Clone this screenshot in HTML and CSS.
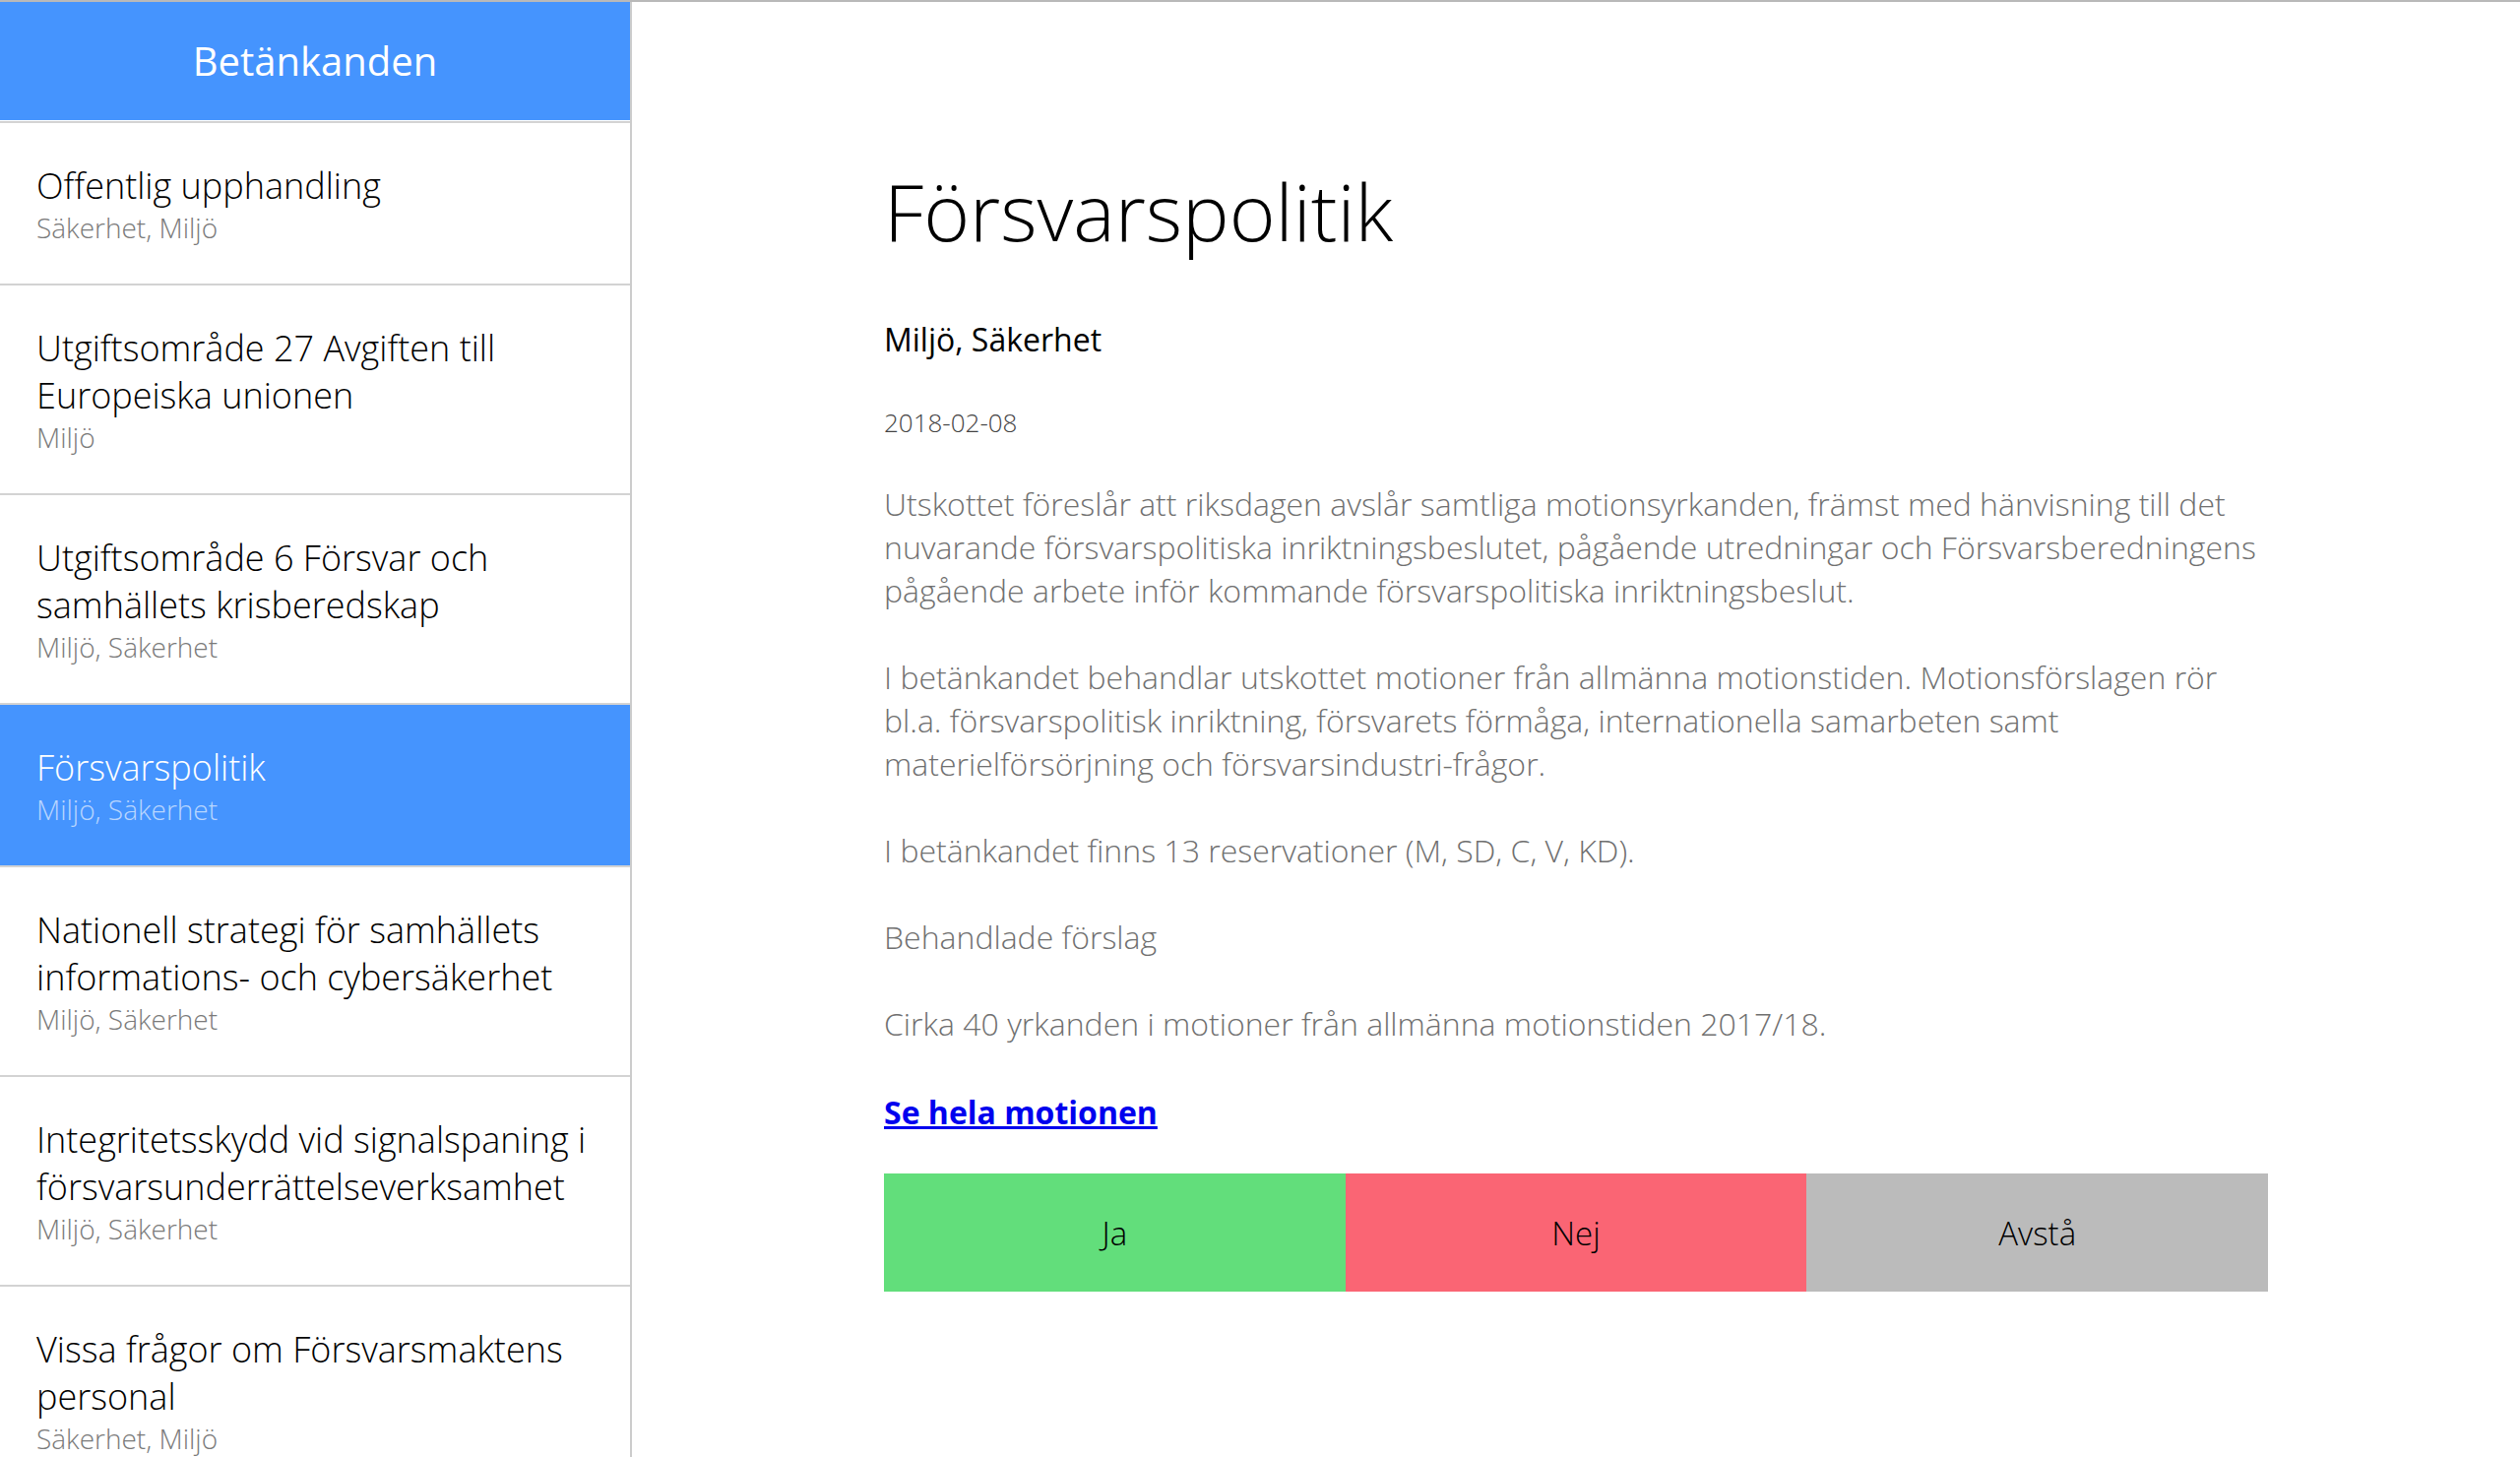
FILE: index.html
```html
<!DOCTYPE html>
<html lang="sv">
<head>
<meta charset="utf-8">
<title>Betänkanden</title>
<link rel="stylesheet" href="styles.css">
</head>
<body>
<div class="app">
  <aside class="sidebar">
    <header class="sidebar-header">Betänkanden</header>
    <ul class="list">
      <li class="item">
        <div class="item-title">Offentlig upphandling</div>
        <div class="item-tags">Säkerhet, Miljö</div>
      </li>
      <li class="item">
        <div class="item-title">Utgiftsområde 27 Avgiften till Europeiska unionen</div>
        <div class="item-tags">Miljö</div>
      </li>
      <li class="item">
        <div class="item-title">Utgiftsområde 6 Försvar och samhällets krisberedskap</div>
        <div class="item-tags">Miljö, Säkerhet</div>
      </li>
      <li class="item item-active">
        <div class="item-title">Försvarspolitik</div>
        <div class="item-tags">Miljö, Säkerhet</div>
      </li>
      <li class="item">
        <div class="item-title">Nationell strategi för samhällets informations- och cybersäkerhet</div>
        <div class="item-tags">Miljö, Säkerhet</div>
      </li>
      <li class="item">
        <div class="item-title">Integritetsskydd vid signalspaning i försvarsunderrättelseverksamhet</div>
        <div class="item-tags">Miljö, Säkerhet</div>
      </li>
      <li class="item">
        <div class="item-title">Vissa frågor om Försvarsmaktens personal</div>
        <div class="item-tags">Säkerhet, Miljö</div>
      </li>
    </ul>
  </aside>
  <main class="main">
    <div class="content">
      <h1 class="title">Försvarspolitik</h1>
      <div class="tags">Miljö, Säkerhet</div>
      <div class="date">2018-02-08</div>
      <div class="desc">
        <p>Utskottet föreslår att riksdagen avslår samtliga motionsyrkanden, främst med hänvisning till det nuvarande försvarspolitiska inriktningsbeslutet, pågående utredningar och Försvarsberedningens pågående arbete inför kommande försvarspolitiska inriktningsbeslut.</p>
        <p>I betänkandet behandlar utskottet motioner från allmänna motionstiden. Motionsförslagen rör bl.a. försvarspolitisk inriktning, försvarets förmåga, internationella samarbeten samt materielförsörjning och försvarsindustri-frågor.</p>
        <p>I betänkandet finns 13 reservationer (M, SD, C, V, KD).</p>
        <p>Behandlade förslag</p>
        <p>Cirka 40 yrkanden i motioner från allmänna motionstiden 2017/18.</p>
        <p class="link-row"><a class="link" href="#">Se hela motionen</a></p>
      </div>
      <div class="votes">
        <button class="vote vote-yes" type="button">Ja</button>
        <button class="vote vote-no" type="button">Nej</button>
        <button class="vote vote-abstain" type="button">Avstå</button>
      </div>
    </div>
  </main>
</div>
</body>
</html>
```

FILE: styles.css
```css
html, body {
  margin: 0;
  padding: 0;
}

body {
  font-family: "Open Sans", "Noto Sans", sans-serif;
  font-weight: 300;
  color: #000;
  background: #fff;
  border-top: 2px solid #b9b9b9;
  height: 1480px;
  box-sizing: border-box;
  overflow: hidden;
}

.app {
  display: flex;
  height: 100%;
}

.sidebar {
  flex: none;
  width: 640px;
  border-right: 2px solid #cccccc;
  overflow: hidden;
}

.sidebar-header {
  height: 120px;
  margin-bottom: 1px;
  background: #4594fe;
  color: #fff;
  font-size: 40px;
  font-weight: 400;
  display: flex;
  align-items: center;
  justify-content: center;
  padding-bottom: 2px;
  box-sizing: border-box;
}

.list {
  list-style: none;
  margin: 0;
  padding: 0;
}

.item {
  border-top: 2px solid #d3d3d3;
  padding: 40px 30px 38px 37px;
}

.item-title {
  font-size: 36px;
  line-height: 48px;
  color: #000;
}

.item-tags {
  font-size: 28px;
  line-height: 37px;
  color: #7a7a7a;
}

.item-active {
  background: #4594fe;
}

.item-active .item-title {
  color: #fff;
}

.item-active .item-tags {
  color: #b9d6fe;
}

.main {
  flex: 1;
  min-width: 0;
}

.content {
  width: 1406px;
  margin: 0 auto;
  padding-top: 162px;
}

.title {
  margin: 0;
  font-size: 80px;
  line-height: 100px;
  font-weight: 300;
  color: #000;
}

.tags {
  margin-top: 61px;
  font-size: 32px;
  line-height: 40px;
  font-weight: 400;
  color: #000;
}

.date {
  margin-top: 47px;
  font-size: 26px;
  line-height: 34px;
  color: #444;
}

.desc {
  margin-top: 44px;
}

.desc p {
  margin: 0 0 44px;
  font-size: 32px;
  line-height: 44px;
  color: #707070;
}

.desc .link-row {
  margin-top: 46px;
  margin-bottom: 0;
}

.link {
  font-size: 32px;
  font-weight: 700;
  color: #0000ee;
  text-decoration: underline;
}

.votes {
  display: flex;
  height: 120px;
  margin-top: 40px;
}

.vote {
  flex: 1;
  border: none;
  margin: 0;
  padding: 0;
  font-family: inherit;
  font-weight: 300;
  font-size: 33px;
  color: #000;
}

.vote-yes {
  background: #62de7b;
}

.vote-no {
  background: #fa6574;
}

.vote-abstain {
  background: #bbbbbb;
}
```
